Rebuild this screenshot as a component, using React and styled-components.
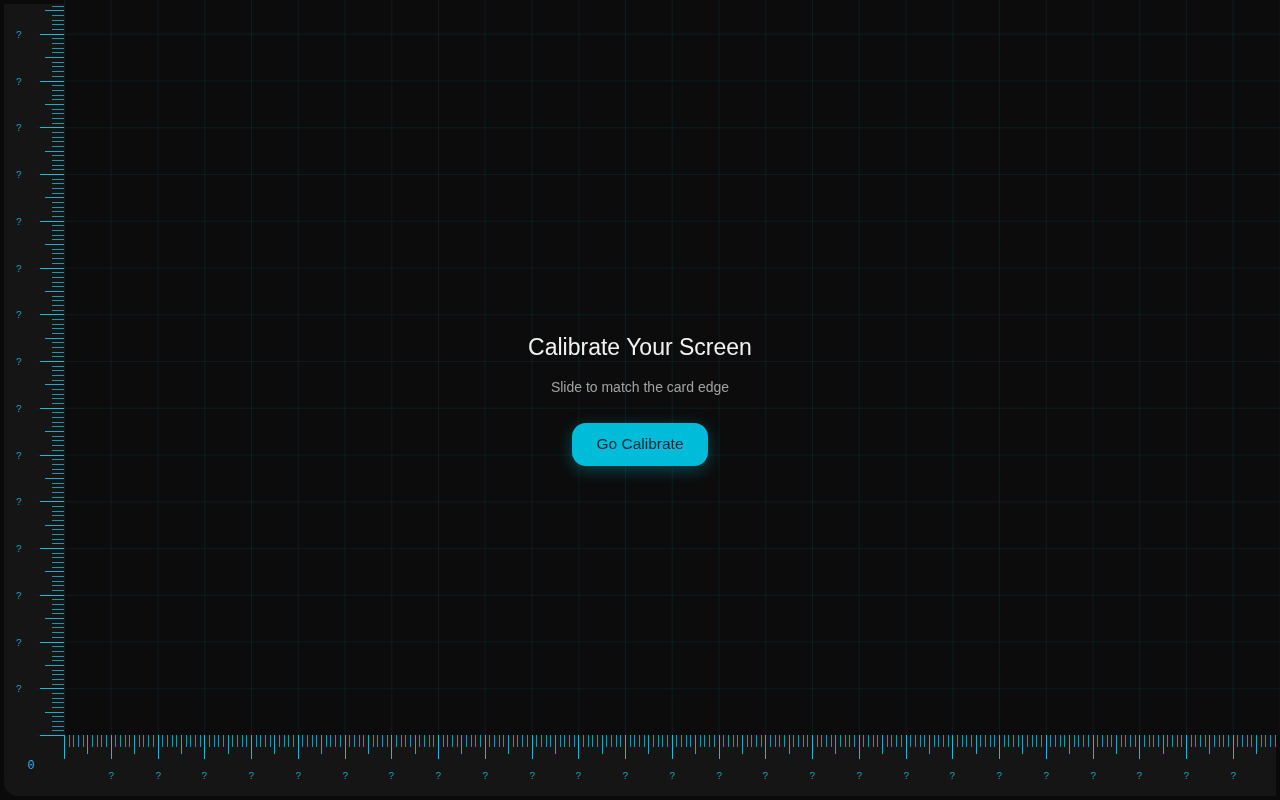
import styled, { createGlobalStyle } from "styled-components";

const MM = 4.675;
const CM = MM * 10;
const CYAN = "#22b4d0";

const tickColor = {
  major: "#1fbadb",
  mid: "#22a9c6",
  minor: "#1f94ad",
};

const GlobalStyle = createGlobalStyle`
  html, body {
    margin: 0;
    padding: 0;
    background: #0a0a0a;
    font-family: "Liberation Sans", Arial, sans-serif;
    overflow: hidden;
  }
`;

const Frame = styled.div`
  display: grid;
  grid-template-columns: 64px 1fr;
  grid-template-rows: 735px 1fr;
  width: 100vw;
  height: 100vh;
  background: #0a0a0a;
`;

const VRuler = styled.div`
  margin: 4px 0 0 4px;
  background: #151515;
  position: relative;
  overflow: visible;
  z-index: 1;
`;

const HRuler = styled.div`
  margin: 0 4px 4px 0;
  background: #151515;
  position: relative;
  overflow: visible;
`;

const Corner = styled.div`
  margin: 0 0 4px 4px;
  background: #151515;
  border-bottom-left-radius: 14px;
  display: flex;
  align-items: center;
  justify-content: center;
  padding-right: 6px;
  color: ${CYAN};
  font-family: "Liberation Mono", "DejaVu Sans Mono", monospace;
  font-size: 12px;
`;

const Canvas = styled.div`
  background-color: #0c0c0c;
  background-image:
    linear-gradient(to right, rgba(0, 188, 212, 0.09) 1px, transparent 1px),
    linear-gradient(to bottom, rgba(0, 188, 212, 0.09) 1px, transparent 1px);
  background-size: ${CM}px ${CM}px;
  background-position: 0 33.75px;
`;

const TickSvg = styled.svg`
  position: absolute;
  inset: 0;
  width: 100%;
  height: 100%;
  overflow: visible;
`;

const Tick = styled.line`
  stroke: ${(p) => tickColor[p.$kind]};
  stroke-width: 1;
`;

const Label = styled.text`
  fill: ${CYAN};
  opacity: 0.85;
  font-family: "Liberation Mono", "DejaVu Sans Mono", monospace;
  font-size: 10px;
`;

const Overlay = styled.div`
  position: fixed;
  inset: 0;
  display: flex;
  flex-direction: column;
  align-items: center;
  justify-content: center;
  pointer-events: none;
`;

const Title = styled.h1`
  margin: 0;
  font-size: 23px;
  font-weight: 400;
  line-height: 1.2;
  color: #f2f2f2;
`;

const Subtitle = styled.p`
  margin: 17px 0 0;
  font-size: 14px;
  line-height: 1.2;
  color: #a3a3a3;
`;

const CalibrateButton = styled.button`
  pointer-events: auto;
  margin-top: 27px;
  height: 43px;
  padding: 0 24px;
  border: none;
  border-radius: 14px;
  background: #00bcd9;
  color: #0c2a38;
  font-family: "Liberation Sans", Arial, sans-serif;
  font-size: 15.5px;
  cursor: pointer;
  box-shadow: 0 4px 16px rgba(0, 188, 212, 0.35);
`;

const kindOf = (i) => (i % 10 === 0 ? "major" : i % 5 === 0 ? "mid" : "minor");
const lengthOf = { major: 24, mid: 19, minor: 12 };

function VerticalTicks() {
  const base = 731;
  const count = Math.floor(base / MM);
  const ticks = [];
  for (let i = 0; i <= count; i++) {
    const y = Math.round(base - i * MM) + 0.5;
    const kind = kindOf(i);
    ticks.push(<Tick key={i} $kind={kind} x1={60 - lengthOf[kind]} x2={60} y1={y} y2={y} />);
    if (kind === "major" && i > 0) {
      ticks.push(
        <Label key={"l" + i} x={15} y={y + 1} textAnchor="middle" dominantBaseline="middle">?</Label>
      );
    }
  }
  return <TickSvg>{ticks}</TickSvg>;
}

function HorizontalTicks() {
  const width = 1212;
  const count = Math.floor(width / MM);
  const ticks = [];
  for (let i = 0; i <= count; i++) {
    const x = Math.round(i * MM) + 0.5;
    const kind = kindOf(i);
    ticks.push(<Tick key={i} $kind={kind} x1={x} x2={x} y1={0} y2={lengthOf[kind]} />);
    if (kind === "major" && i > 0) {
      ticks.push(
        <Label key={"l" + i} x={x} y={41} textAnchor="middle" dominantBaseline="middle">?</Label>
      );
    }
  }
  return <TickSvg>{ticks}</TickSvg>;
}

export default function App() {
  return (
    <>
      <GlobalStyle />
      <Frame>
        <VRuler>
          <VerticalTicks />
        </VRuler>
        <Canvas />
        <Corner>0</Corner>
        <HRuler>
          <HorizontalTicks />
        </HRuler>
      </Frame>
      <Overlay>
        <Title>Calibrate Your Screen</Title>
        <Subtitle>Slide to match the card edge</Subtitle>
        <CalibrateButton>Go Calibrate</CalibrateButton>
      </Overlay>
    </>
  );
}
